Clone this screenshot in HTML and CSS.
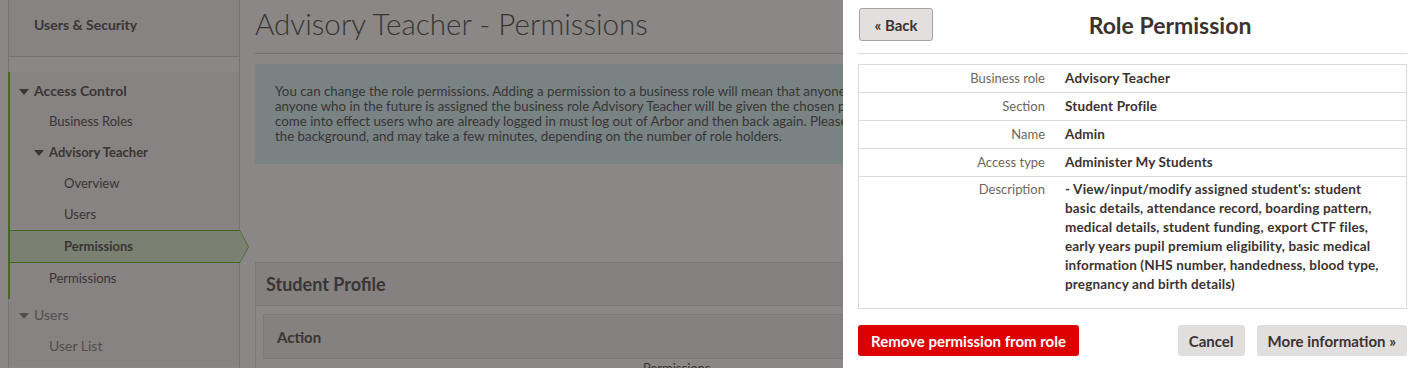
FILE: index.html
```html
<!DOCTYPE html>
<html lang="en">
<head>
  <meta charset="UTF-8" />
  <meta name="viewport" content="width=device-width, initial-scale=1.0" />
  <title>Advisory Teacher - Permissions</title>
  <link rel="stylesheet" href="styles.css">
</head>
<body>

<div class="app">
  <!-- Sidebar -->
  <aside class="sidebar">
    <div class="sidebar-head">Users &amp; Security</div>

    <ul class="nav-group open">
      <li class="nav-item level-0 bold"><span class="caret"></span>Access Control</li>
      <li class="nav-item level-1">Business Roles</li>
      <li class="nav-item level-1 bold"><span class="caret"></span>Advisory Teacher</li>
      <li class="nav-item level-2">Overview</li>
      <li class="nav-item level-2">Users</li>
      <li class="nav-item level-2 bold active">Permissions</li>
      <li class="nav-item level-1">Permissions</li>
    </ul>

    <ul class="nav-group muted">
      <li class="nav-item level-0"><span class="caret"></span>Users</li>
      <li class="nav-item level-1">User List</li>
    </ul>
  </aside>

  <!-- Main content -->
  <main class="main">
    <h1 class="page-title">Advisory Teacher - Permissions</h1>

    <div class="info-box">
      You can change the role permissions. Adding a permission to a business role will mean that anyone who currently holds the business role Advisory Teacher and<br>
      anyone who in the future is assigned the business role Advisory Teacher will be given the chosen permission. For the changes to<br>
      come into effect users who are already logged in must log out of Arbor and then back again. Please note that changes are processed in<br>
      the background, and may take a few minutes, depending on the number of role holders.
    </div>

    <div class="section">
      <div class="section-head">Student Profile</div>
      <div class="section-body">
        <div class="grid-head">Action</div>
        <div class="grid-row">Permissions</div>
      </div>
    </div>
  </main>
</div>

<div class="overlay"></div>

<!-- Slide-over panel -->
<div class="drawer">
  <div class="drawer-head">
    <button class="btn btn-back">&laquo; Back</button>
    <h2 class="drawer-title">Role Permission</h2>
  </div>

  <table class="props">
    <tr><th>Business role</th><td>Advisory Teacher</td></tr>
    <tr><th>Section</th><td>Student Profile</td></tr>
    <tr><th>Name</th><td>Admin</td></tr>
    <tr><th>Access type</th><td>Administer My Students</td></tr>
    <tr class="desc">
      <th>Description</th>
      <td>- View/input/modify assigned student's: student basic details, attendance record, boarding pattern, medical details, student funding, export CTF files, early years pupil premium eligibility, basic medical information (NHS number, handedness, blood type, pregnancy and birth details)</td>
    </tr>
  </table>

  <div class="drawer-actions">
    <button class="btn btn-danger">Remove permission from role</button>
    <div class="right-actions">
      <button class="btn btn-grey">Cancel</button>
      <button class="btn btn-grey">More information &raquo;</button>
    </div>
  </div>
</div>

</body>
</html>
```

FILE: styles.css
```css
body {
  font-family: 'Lato', 'Liberation Sans', sans-serif;
  background-color: #fbf6f4;
  color: #6a6262;
  margin: 0;
  overflow: hidden;
}

.app {
  display: flex;
  padding-left: 8px;
  min-height: 368px;
}

/* Sidebar */
.sidebar {
  width: 230px;
  flex-shrink: 0;
  border-left: 1px solid #d8d2d0;
  border-right: 1px solid #d8d2d0;
  background-color: #fbf6f4;
}

.sidebar-head {
  height: 48px;
  padding: 8px 0 0 25px;
  font-size: 14px;
  font-weight: bold;
  line-height: 34px;
  color: #6a6262;
  background-color: #f6efed;
  border-bottom: 1px solid #d6d0ce;
  margin-bottom: 15px;
}

.nav-group {
  list-style: none;
  margin: 0;
  padding: 3px 0 5px;
  background-color: #f6efed;
  font-size: 13px;
}

.nav-group.open {
  border-left: 2px solid #7cc043;
  margin-left: -1px;
}

.nav-group.muted {
  color: #978f8e;
  font-size: 14px;
  padding-top: 0;
}

.nav-item {
  position: relative;
  height: 31px;
  line-height: 31px;
  white-space: nowrap;
}

.nav-item.bold {
  font-weight: bold;
}

.level-0 { padding-left: 24px; font-size: 14px; }
.level-1 { padding-left: 39px; }
.level-2 { padding-left: 54px; }

.muted .level-0 { padding-left: 25px; }
.muted .level-1 { padding-left: 40px; }

.caret {
  display: inline-block;
  width: 0;
  height: 0;
  border-left: 5px solid transparent;
  border-right: 5px solid transparent;
  border-top: 6px solid currentColor;
  margin: 0 5px 1px -15px;
  vertical-align: middle;
}

.nav-item.active {
  background-color: #e1ebcf;
  border-top: 1px solid #7cc043;
  border-bottom: 1px solid #7cc043;
  margin-right: -1px;
  height: 31px;
  line-height: 31px;
}

.nav-item.active::after,
.nav-item.active::before {
  content: "";
  position: absolute;
  top: -1px;
  left: 100%;
  border-top: 17px solid transparent;
  border-bottom: 16px solid transparent;
  border-left: 9px solid #7cc043;
}

.nav-item.active::after {
  top: 0;
  border-top-width: 16px;
  border-bottom-width: 15px;
  border-left: 8px solid #e1ebcf;
}

/* Main */
.main {
  flex: 1;
  margin-left: 15px;
  margin-right: 8px;
}

.page-title {
  margin: 0;
  padding-top: 6px;
  height: 47px;
  font-size: 29.6px;
  font-weight: 300;
  line-height: 36px;
  color: #6a6262;
  border-bottom: 1px solid #d4cecc;
}

.info-box {
  margin-top: 10px;
  padding: 20px;
  height: 60px;
  background-color: #dcefef;
  font-size: 13.3px;
  line-height: 15px;
  white-space: nowrap;
  overflow: hidden;
}

.section {
  margin-top: 98px;
  border: 1px solid #e2dcda;
  background-color: #fbf6f4;
}

.section-head {
  height: 42px;
  line-height: 42px;
  padding-left: 10px;
  font-size: 18px;
  font-weight: bold;
  background-color: #f2ebe9;
  border-bottom: 1px solid #e2dcda;
}

.section-body {
  padding: 8px 0 0 7px;
}

.grid-head {
  height: 43px;
  line-height: 44px;
  padding-left: 13px;
  font-size: 15px;
  font-weight: bold;
  background-color: #f2ebe9;
  border: 1px solid #e2dcda;
}

.grid-row {
  padding-left: 380px;
  line-height: 18px;
  font-size: 13px;
}

/* Overlay and panel */
.overlay {
  position: fixed;
  top: 0;
  left: 0;
  right: 0;
  bottom: 0;
  background-color: rgba(0, 0, 0, 0.45);
}

.drawer {
  position: fixed;
  top: 0;
  right: 0;
  bottom: 0;
  width: 549px;
  padding: 8px 10px 0 15px;
  background-color: #fff;
  color: #3b3331;
}

.drawer-head {
  display: flex;
  align-items: center;
  padding-bottom: 12px;
  border-bottom: 1px solid #dedad8;
}

.drawer-title {
  flex: 1;
  margin: 0;
  text-align: center;
  font-size: 23px;
  font-weight: bold;
  color: #3b3331;
}

.btn {
  font-family: inherit;
  font-weight: bold;
  border: none;
  border-radius: 3px;
  height: 31px;
  padding: 0 11px;
  font-size: 15px;
  cursor: pointer;
}

.btn-back {
  margin-left: 1px;
  height: 33px;
  width: 74px;
  padding: 0;
  background-color: #e3dfde;
  border: 1px solid #a8a4a3;
  color: #3b3331;
  font-size: 15px;
}

.props {
  width: 100%;
  margin-top: 10px;
  border-collapse: collapse;
  border: 1px solid #dedad8;
  font-size: 13px;
}

.props tr {
  border-top: 1px solid #dedad8;
}

.props th,
.props td {
  padding: 5px 10px;
  line-height: 17px;
  text-align: left;
  vertical-align: top;
}

.props th {
  width: 176px;
  text-align: right;
  font-weight: normal;
  color: #6e6663;
}

.props td {
  font-weight: bold;
  font-size: 13.5px;
  letter-spacing: 0.15px;
  padding-right: 20px;
}

.props .desc th,
.props .desc td {
  padding-top: 3px;
  padding-bottom: 14px;
  line-height: 19px;
}

.drawer-actions {
  display: flex;
  justify-content: space-between;
  margin-top: 16px;
}

.right-actions {
  display: flex;
  gap: 12px;
}

.btn-danger {
  padding: 0 13px;
  background-color: #dd0000;
  color: #fff;
}

.btn-grey {
  background-color: #e1dede;
  color: #3b3331;
}
```
